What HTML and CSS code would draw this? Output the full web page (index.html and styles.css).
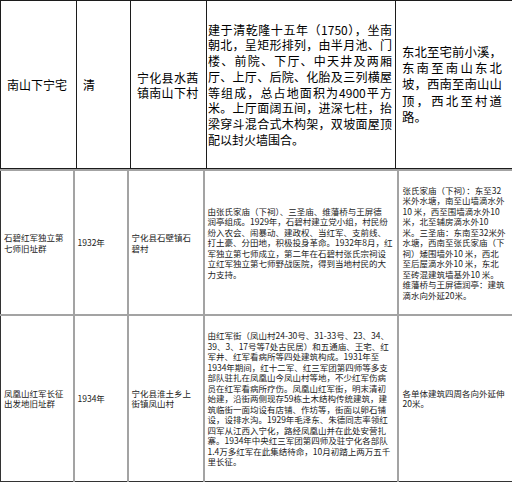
FILE: index.html
```html
<!DOCTYPE html>
<html lang="zh-CN">
<head>
<meta charset="utf-8">
<link rel="stylesheet" href="styles.css">
</head>
<body>
<div class="sheet">
  <table class="t1">
    <colgroup>
      <col class="w1a"><col class="w2a"><col class="w3a"><col class="w4a"><col class="w5a">
    </colgroup>
    <tr>
      <td class="a1">南山下宁宅</td>
      <td class="a2">清</td>
      <td class="a3">宁化县水茜镇南山下村</td>
      <td class="a4">建于清乾隆十五年（1750），坐南朝北，呈矩形排列，由半月池、门楼、前院、下厅、中天井及两厢厅、上厅、后院、化胎及三列横屋等组成，总占地面积为4900平方米。上厅面阔五间，进深七柱，抬梁穿斗混合式木构架，双坡面屋顶配以封火墙围合。</td>
      <td class="a5">东北至宅前小溪，东南至南山东北坡，西南至南山山顶，西北至村道路。</td>
    </tr>
  </table>
  <table class="t2">
    <colgroup>
      <col class="w1b"><col class="w2b"><col class="w3b"><col class="w4b"><col class="w5b">
    </colgroup>
    <tr class="r2">
      <td class="b1">石碧红军独立第<br>七师旧址群</td>
      <td class="b2">1932年</td>
      <td class="b3">宁化县石壁镇石<br>碧村</td>
      <td class="b4">由张氏家庙（下祠）、三圣庙、维藩桥与王屏德<br>润亭组成。1929年，石碧村建立党小组，村民纷<br>纷入农会、闹暴动、建政权、当红军、支前线、<br>打土豪、分田地，积极投身革命。1932年8月，红<br>军独立第七师成立，第二年在石碧村张氏宗祠设<br>立红军独立第七师野战医院，得到当地村民的大<br>力支持。</td>
      <td class="b5">张氏家庙（下祠）：东至32<br>米外水塘，南至山墙滴水外<br>10 米，西至围墙滴水外10<br>米，北至辅房滴水外10<br>米。三圣庙：东南至32米外<br>水塘，西南至张氏家庙（下<br>祠）矮围墙外10 米，西北<br>至后屋滴水外10 米，东北<br>至砖混建筑墙基外10 米。<br>维藩桥与王屏德润亭：建筑<br>滴水向外延20米。</td>
    </tr>
    <tr class="r3">
      <td class="b1">凤凰山红军长征<br>出发地旧址群</td>
      <td class="b2">1934年</td>
      <td class="b3">宁化县淮土乡上<br>街镇凤山村</td>
      <td class="b4">由红军街（凤山村24-30号、31-33号、23、34、<br>39、3、17号等7处古民居）和五通庙、王宅、红<br>军井、红军看病所等四处建筑构成。1931年至<br>1934年期间，红十二军、红三军团第四师等多支<br>部队驻扎在凤凰山今凤山村等地，不少红军伤病<br>员在红军看病所疗伤。凤凰山红军街，明末清初<br>始建，沿街两侧现存59栋土木结构传统建筑，建<br>筑临街一面均设有店铺、作坊等，街面以卵石铺<br>设，设排水沟。1929年毛泽东、朱德同志率领红<br>四军从江西入宁化，路经凤凰山并在此处安营扎<br>寨。1934年中央红三军团第四师及驻宁化各部队<br>1.4万多红军在此集结待命，10月初踏上两万五千<br>里长征。</td>
      <td class="b5">各单体建筑四周各向外延伸<br>20米。</td>
    </tr>
  </table>
</div>
</body>
</html>
```
FILE: styles.css
```css
html, body {
  margin: 0;
  padding: 0;
  background: #ffffff;
  overflow: hidden;
}
body {
  font-family: "Noto Sans CJK SC", "Noto Sans", sans-serif;
  color: #111111;
}
.sheet {
  width: 512px;
  height: 482px;
  overflow: hidden;
}
table {
  border-collapse: collapse;
  table-layout: fixed;
}

/* first table: dark 1px rules */
.t1 {
  width: 512px;
  height: 169px;
}
.w1a { width: 76px; }
.w2a { width: 54px; }
.w3a { width: 76px; }
.w4a { width: 189px; }
.w5a { width: 117px; }
.t1 td {
  border: 1px solid #1c1c1c;
  font-size: 12px;
  line-height: 15px;
  vertical-align: middle;
  padding: 0 4px 0 6px;
  color: #000;
}
.a1 { letter-spacing: 0; white-space: nowrap; }
.a3 { letter-spacing: 0.3px; }
.a4 {
  padding: 0 3px 0 1px !important;
  line-height: 15.7px !important;
  text-align: justify;
}
.a5 {
  padding: 0 10px 0 6px !important;
  font-size: 12.4px !important;
  line-height: 16.3px !important;
  text-align: justify;
}

/* second table: grey 2px rules */
.t2 {
  width: 514px;
}
.w1b { width: 73px; }
.w2b { width: 54px; }
.w3b { width: 76px; }
.w4b { width: 194px; }
.w5b { width: 117px; }
.t2 td {
  border: 2px solid #a3a3a3;
  font-size: 8.5px;
  line-height: 10.5px;
  vertical-align: middle;
  padding: 0 2px 0 3px;
  white-space: nowrap;
  color: #222;
}
.t2 td.b1 { border-left: 1px solid #333; }
.t2 td.b5 { padding-left: 4px; }
.t2 tr.r3 td { border-bottom: 1px solid #333; }
.r2 { height: 145px; }
.r3 { height: 166px; }
```
